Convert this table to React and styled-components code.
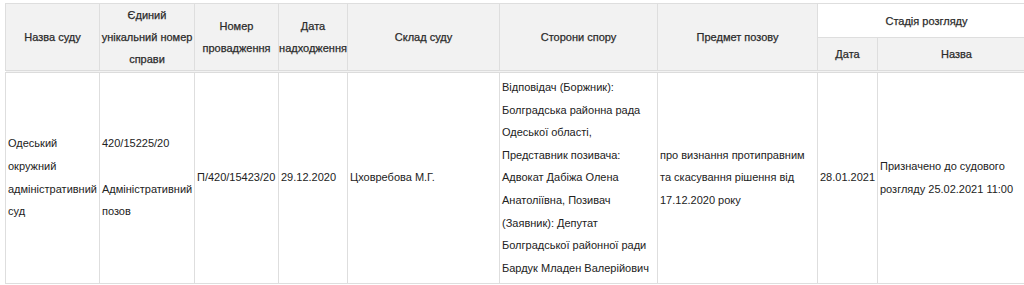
import React from "react";
import styled, { createGlobalStyle } from "styled-components";

const Global = createGlobalStyle`
  html, body { margin: 0; padding: 0; background: #fff; overflow: hidden; }
  body { font-family: "Liberation Sans", Arial, sans-serif; }
`;

const Page = styled.div`
  padding: 3px 0 0 5px;
  width: 1040px;
`;

const Table = styled.table`
  border-collapse: collapse;
  table-layout: fixed;
  width: 1030px;
  font-size: 11px;
  line-height: 22.6px;
  color: #333;
`;

const Th = styled.th`
  background: ${(p) => (p.$plain ? "#fff" : "#f2f2f2")};
  border: 1px solid #dedede;
  border-bottom: ${(p) => (p.$last ? "3px double #dcdcdc" : "1px solid #dedede")};
  font-weight: normal;
  color: #2b2b2b;
  text-align: center;
  vertical-align: middle;
  padding: 0;
  line-height: 22px;
  -webkit-text-stroke: 0.25px #2b2b2b;
`;

const Td = styled.td`
  border: 1px solid #dedede;
  text-align: left;
  vertical-align: middle;
  padding: 3px 2px 4px;
  color: #222;
`;

const cols = [94, 95, 84, 69, 152, 158, 160, 60, 158];

export default function App() {
  return (
    <Page>
      <Global />
      <Table>
        <colgroup>
          {cols.map((w, i) => (
            <col key={i} style={{ width: w }} />
          ))}
        </colgroup>
        <thead>
          <tr>
            <Th rowSpan={2} $last>Назва суду</Th>
            <Th rowSpan={2} $last>Єдиний унікальний номер справи</Th>
            <Th rowSpan={2} $last>Номер провадження</Th>
            <Th rowSpan={2} $last>Дата надходження</Th>
            <Th rowSpan={2} $last>Склад суду</Th>
            <Th rowSpan={2} $last>Сторони спору</Th>
            <Th rowSpan={2} $last>Предмет позову</Th>
            <Th colSpan={2} $plain style={{ height: 32 }}>Стадія розгляду</Th>
          </tr>
          <tr>
            <Th $last style={{ height: 31 }}>Дата</Th>
            <Th $last>Назва</Th>
          </tr>
        </thead>
        <tbody>
          <tr>
            <Td>Одеський окружний адміністративний суд</Td>
            <Td>
              420/15225/20
              <br />
              <br />
              Адміністративний позов
            </Td>
            <Td>П/420/15423/20</Td>
            <Td>29.12.2020</Td>
            <Td>Цховребова М.Г.</Td>
            <Td>
              Відповідач (Боржник): Болградська районна рада Одеської області,
              Представник позивача: Адвокат Дабіжа Олена Анатоліївна, Позивач
              (Заявник): Депутат Болградської районної ради Бардук Младен
              Валерійович
            </Td>
            <Td>про визнання протиправним та скасування рішення від 17.12.2020 року</Td>
            <Td>28.01.2021</Td>
            <Td>Призначено до судового розгляду 25.02.2021 11:00</Td>
          </tr>
        </tbody>
      </Table>
    </Page>
  );
}
